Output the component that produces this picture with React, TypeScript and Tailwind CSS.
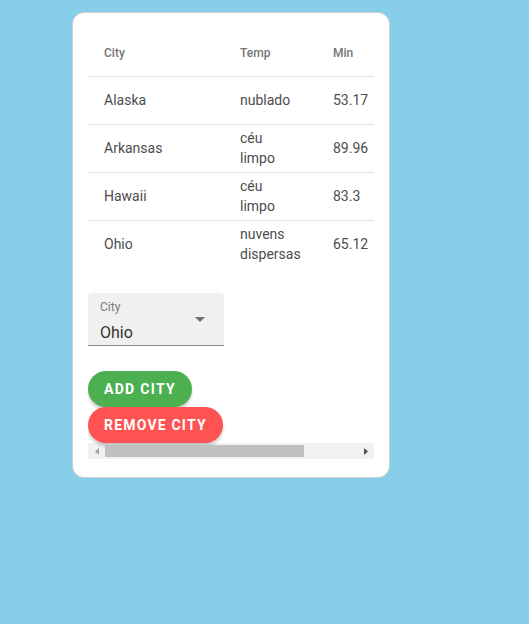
const rows = [
  { city: 'Alaska', temp: ['nublado'], min: '53.17' },
  { city: 'Arkansas', temp: ['céu', 'limpo'], min: '89.96' },
  { city: 'Hawaii', temp: ['céu', 'limpo'], min: '83.3' },
  { city: 'Ohio', temp: ['nuvens', 'dispersas'], min: '65.12' },
];

export default function App() {
  return (
    <div className="h-[624px] w-full bg-[#87ceeb] pt-3 font-['Roboto',sans-serif]">
      <div className="ml-[72px] w-[318px] rounded-xl border border-[#cfcfcf] bg-white px-[15px] pt-[15px] pb-[18px]">
        <div className="overflow-hidden">
          <table className="w-[286px] table-fixed border-collapse text-left">
            <colgroup>
              <col className="w-[136px]" />
              <col className="w-[93px]" />
              <col className="w-[57px]" />
            </colgroup>
            <thead>
              <tr className="h-12 border-b border-[#e0e0e0]">
                <th className="pl-4 pt-[2px] text-xs font-medium text-[#757575]">City</th>
                <th className="pl-4 pt-[2px] text-xs font-medium text-[#757575]">Temp</th>
                <th className="pl-4 pt-[2px] text-xs font-medium text-[#757575]">Min</th>
              </tr>
            </thead>
            <tbody>
              {rows.map((r, i) => (
                <tr
                  key={r.city}
                  className={'h-12 ' + (i < rows.length - 1 ? 'border-b border-[#e0e0e0]' : '')}
                >
                  <td className="pl-4 text-sm text-[#4d4d4d]">{r.city}</td>
                  <td className="whitespace-nowrap pl-4 text-sm leading-5 text-[#4d4d4d]">
                    {r.temp.map((t) => (
                      <div key={t}>{t}</div>
                    ))}
                  </td>
                  <td className="whitespace-nowrap pl-4 text-sm text-[#4d4d4d]">{r.min}</td>
                </tr>
              ))}
            </tbody>
          </table>

          <div className="mt-[25px] flex h-[53px] w-[136px] items-start justify-between rounded-t border-b border-[#8a8a8a] bg-[#f0f0f0] px-3 pt-[6px]">
            <div>
              <div className="text-xs leading-4 text-[#7a7a7a]">City</div>
              <div className="mt-[6px] text-base leading-6 text-[#333]">Ohio</div>
            </div>
            <svg width="10" height="5" viewBox="0 0 10 5" className="mt-[18px] mr-[7px]">
              <path d="M0 0 L10 0 L5 5 Z" fill="#707070" />
            </svg>
          </div>

          <div className="mt-[25px] flex flex-col items-start">
            <button className="h-9 rounded-full bg-[#4caf50] px-4 text-sm font-bold tracking-[1.3px] text-white shadow-[0_3px_3px_rgba(0,0,0,0.2)]">
              ADD CITY
            </button>
            <button className="h-9 rounded-full bg-[#ff5252] px-4 text-sm font-bold tracking-[1.2px] text-white shadow-[0_3px_3px_rgba(0,0,0,0.2)]">
              REMOVE CITY
            </button>
          </div>

          <div className="flex h-4 w-[286px] items-center bg-[#f1f1f1]">
            <div className="flex w-[17px] justify-center">
              <svg width="4" height="7" viewBox="0 0 4 7">
                <path d="M4 0 L0 3.5 L4 7 Z" fill="#a3a3a3" />
              </svg>
            </div>
            <div className="h-3 w-[199px] bg-[#c1c1c1]" />
            <div className="flex-1" />
            <div className="flex w-[17px] justify-center">
              <svg width="4" height="7" viewBox="0 0 4 7">
                <path d="M0 0 L4 3.5 L0 7 Z" fill="#505050" />
              </svg>
            </div>
          </div>
        </div>
      </div>
    </div>
  );
}
